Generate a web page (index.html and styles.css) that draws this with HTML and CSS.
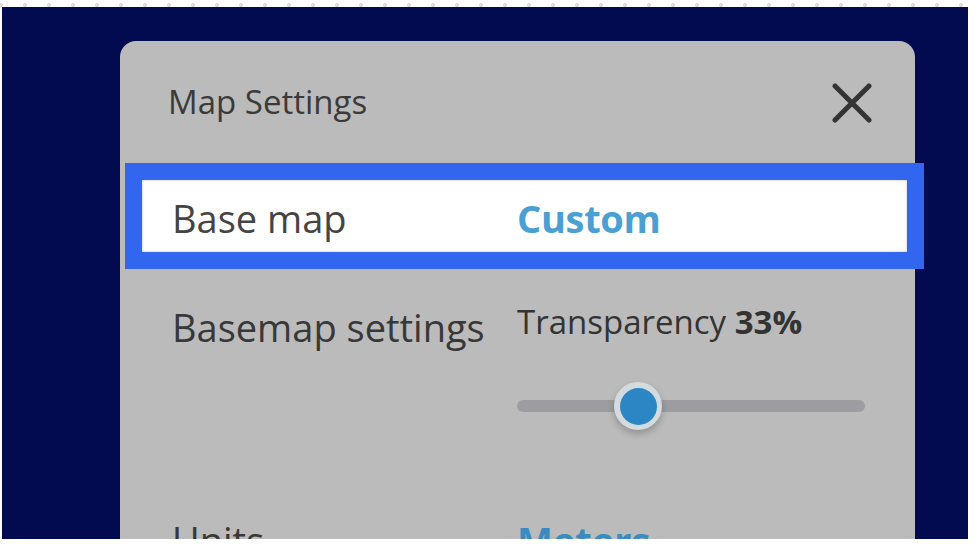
FILE: index.html
```html
<!DOCTYPE html>
<html>
<head>
<meta charset="utf-8">
<link rel="stylesheet" href="styles.css">
</head>
<body>
<div class="screen">
  <div class="panel">
    <div class="header">
      <div class="title">Map Settings</div>
      <svg class="close" width="40" height="40" viewBox="0 0 40 40"><path d="M3 3 L37 37 M37 3 L3 37" stroke="#333" stroke-width="5" stroke-linecap="round" fill="none"/></svg>
    </div>
    <div class="row row-hl">
      <div class="label">Base map</div>
      <div class="value">Custom</div>
    </div>
    <div class="row row-settings">
      <div class="label">Basemap settings</div>
      <div class="controls">
        <div class="trans">Transparency <b>33%</b></div>
        <div class="slider">
          <div class="track"></div>
          <div class="thumb"><div class="thumb-in"></div></div>
        </div>
      </div>
    </div>
    <div class="row row-units">
      <div class="label">Units</div>
      <div class="value dim">Meters</div>
    </div>
  </div>
</div>
</body>
</html>
```
FILE: styles.css
```css
html, body {
  margin: 0;
  padding: 0;
}
body {
  width: 976px;
  height: 546px;
  overflow: hidden;
  background-color: #fff;
  background-image: radial-gradient(circle, #dcdcdc 1.6px, transparent 2.2px);
  background-size: 24px 8px;
  background-repeat: repeat-x;
  background-position: 13px 1px;
  font-family: "Open Sans", "DejaVu Sans", sans-serif;
}
.screen {
  margin: 7px 8px 0 2px;
  height: 532px;
  background: #030b50;
  overflow: hidden;
  padding: 34px 0 0 118px;
  box-sizing: border-box;
}
.panel {
  width: 795px;
  height: 700px;
  background: #bbbbbb;
  border-radius: 16px;
  padding: 41px 43px 0 0;
  box-sizing: border-box;
}
.header {
  display: flex;
  align-items: center;
  justify-content: space-between;
  height: 40px;
  padding-left: 48px;
}
.title {
  font-size: 33px;
  line-height: 40px;
  color: #3a3a3a;
}
.close {
  display: block;
  margin-top: 1px;
}
.row {
  display: flex;
  align-items: flex-start;
  padding-left: 52px;
}
.label {
  width: 345px;
  flex: none;
  font-size: 38px;
  line-height: 52px;
  color: #383838;
  white-space: nowrap;
}
.value {
  font-size: 38px;
  line-height: 52px;
  font-weight: 700;
  color: #4aa0d2;
}
.value.dim {
  color: #3a8cc0;
}
.row-hl {
  margin: 58px -35px 0 22px;
  padding: 12px 0 8px 30px;
  background: #fff;
  outline: 17px solid #3366ee;
  box-shadow: inset 0 0 3px rgba(0,0,0,0.25);
}
.row-hl .label {
  color: #444;
}
.row-hl .value {
  letter-spacing: -0.3px;
}
.row-settings {
  margin-top: 49px;
}
.controls {
  width: 348px;
  padding-top: 1px;
}
.trans {
  font-size: 33px;
  line-height: 40px;
  color: #333;
  white-space: nowrap;
}
.trans b {
  font-weight: 700;
}
.slider {
  position: relative;
  height: 48px;
  margin-top: 40px;
  display: flex;
  align-items: center;
}
.track {
  width: 100%;
  height: 12px;
  border-radius: 6px;
  background: #9d9da1;
}
.thumb {
  position: absolute;
  left: 97px;
  top: 0;
  width: 48px;
  height: 48px;
  border-radius: 50%;
  background: #d3dbdf;
  box-shadow: 0 4px 7px rgba(0,0,0,0.22);
  display: flex;
  align-items: center;
  justify-content: center;
}
.thumb-in {
  width: 37px;
  height: 37px;
  border-radius: 50%;
  background: #2b86c3;
}
.row-units {
  margin-top: 84px;
}
```
